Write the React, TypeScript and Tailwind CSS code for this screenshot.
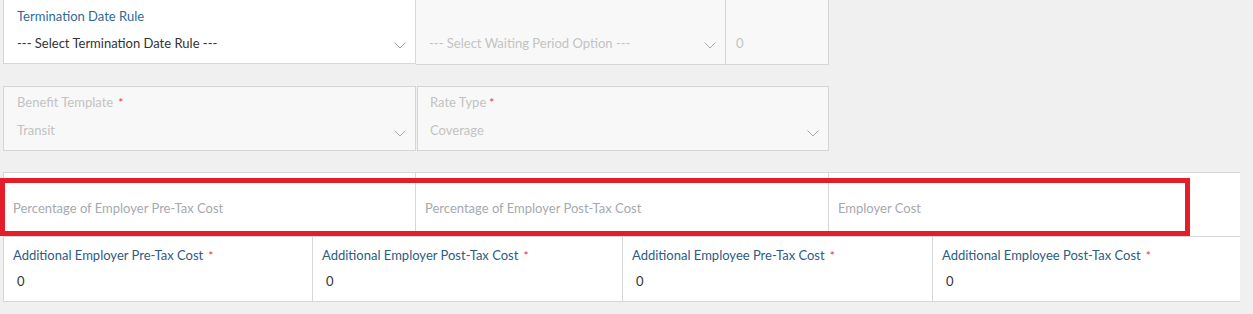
import React from "react";

const Chevron = ({ color = "#9a9a9a" }: { color?: string }) => (
  <svg width="12" height="7" viewBox="0 0 12 7" className="shrink-0">
    <path d="M0.5 0.5 L6 6 L11.5 0.5" fill="none" stroke={color} strokeWidth="1" />
  </svg>
);

const Req = () => <span className="ml-[5px] text-[12px] text-[#e8343c]">*</span>;

export default function App() {
  return (
    <div
      className="relative w-full h-[314px] bg-[#f0f0f0] overflow-hidden text-[13px]"
      style={{ fontFamily: "Lato, 'Open Sans', sans-serif" }}
    >
      {/* Row 1 */}
      <div className="flex pl-[3px] items-start">
        <div className="w-[413px] h-[64px] bg-white border border-t-0 border-[#d6d6d6] pl-[13px] pr-[9px] pt-[6px]">
          <div className="leading-5 text-[#2f6a9c]">Termination Date Rule</div>
          <div className="mt-[7px] flex items-center justify-between leading-5 text-[#333]">
            <span>--- Select Termination Date Rule ---</span>
            <span className="mt-[4px]"><Chevron /></span>
          </div>
        </div>
        <div className="w-[310px] h-[65px] bg-[#f8f8f8] border border-t-0 border-l-0 border-[#d6d6d6] pl-[13px] pr-[9px] pt-[33px]">
          <div className="flex items-center justify-between leading-5 text-[#c3c3c3]">
            <span>--- Select Waiting Period Option ---</span>
            <span className="mt-[4px]"><Chevron color="#a8a8a8" /></span>
          </div>
        </div>
        <div className="w-[103px] h-[65px] bg-[#f8f8f8] border border-t-0 border-l-0 border-[#d6d6d6] pl-[10px] pt-[33px]">
          <div className="leading-5 text-[#c3c3c3]">0</div>
        </div>
      </div>

      {/* Row 2 */}
      <div className="flex pl-[3px] mt-[21px]">
        <div className="w-[413px] h-[65px] bg-[#f8f8f8] border border-[#d6d6d6] pl-[13px] pr-[9px] pt-[5px]">
          <div className="leading-5 text-[#c3c3c3]">
            Benefit Template<Req />
          </div>
          <div className="mt-[7px] flex items-center justify-between leading-5 text-[#c3c3c3]">
            <span>Transit</span>
            <span className="mt-[6px]"><Chevron color="#a8a8a8" /></span>
          </div>
        </div>
        <div className="ml-[1px] w-[412px] h-[65px] bg-[#f8f8f8] border border-[#d6d6d6] pl-[12px] pr-[9px] pt-[5px]">
          <div className="leading-5 text-[#c3c3c3]">
            Rate Type<span className="ml-[3px] text-[12px] text-[#e8343c]">*</span>
          </div>
          <div className="mt-[7px] flex items-center justify-between leading-5 text-[#c3c3c3]">
            <span>Coverage</span>
            <span className="mt-[6px]"><Chevron color="#a8a8a8" /></span>
          </div>
        </div>
      </div>

      {/* Row 3 */}
      <div className="flex pl-[3px] mt-[21px]">
        <div className="w-[413px] h-[65px] bg-white border border-[#d6d6d6] pl-[9px] pt-[25px]">
          <div className="leading-5 text-[#a6aaae]">Percentage of Employer Pre-Tax Cost</div>
        </div>
        <div className="w-[413px] h-[65px] bg-white border border-l-0 border-[#d6d6d6] pl-[9px] pt-[25px]">
          <div className="leading-5 text-[#a6aaae]">Percentage of Employer Post-Tax Cost</div>
        </div>
        <div className="w-[411px] h-[65px] bg-white border border-l-0 border-r-0 border-[#d6d6d6] pl-[9px] pt-[25px]">
          <div className="leading-5 text-[#a6aaae]">Employer Cost</div>
        </div>
      </div>

      {/* Row 4 */}
      <div className="flex pl-[3px]">
        {[
          { label: "Additional Employer Pre-Tax Cost", w: "w-[310px]" },
          { label: "Additional Employer Post-Tax Cost", w: "w-[310px]" },
          { label: "Additional Employee Pre-Tax Cost", w: "w-[310px]" },
          { label: "Additional Employee Post-Tax Cost", w: "w-[307px]" },
        ].map((c, i) => (
          <div
            key={i}
            className={`${c.w} h-[65px] bg-white border-b border-[#d6d6d6] ${i === 0 ? "border-l" : ""} ${i < 3 ? "border-r" : ""} pl-[9px] pt-[8px]`}
          >
            <div className="leading-5 text-[#2d5c85]">
              {c.label}
              <Req />
            </div>
            <div className="mt-[5px] pl-[4px] leading-5 text-[#333]">0</div>
          </div>
        ))}
      </div>

      {/* Red highlight */}
      <div className="absolute left-0 top-[178px] w-[1190px] h-[58px] border-[5px] border-[#e31e2a] pointer-events-none" />
    </div>
  );
}
